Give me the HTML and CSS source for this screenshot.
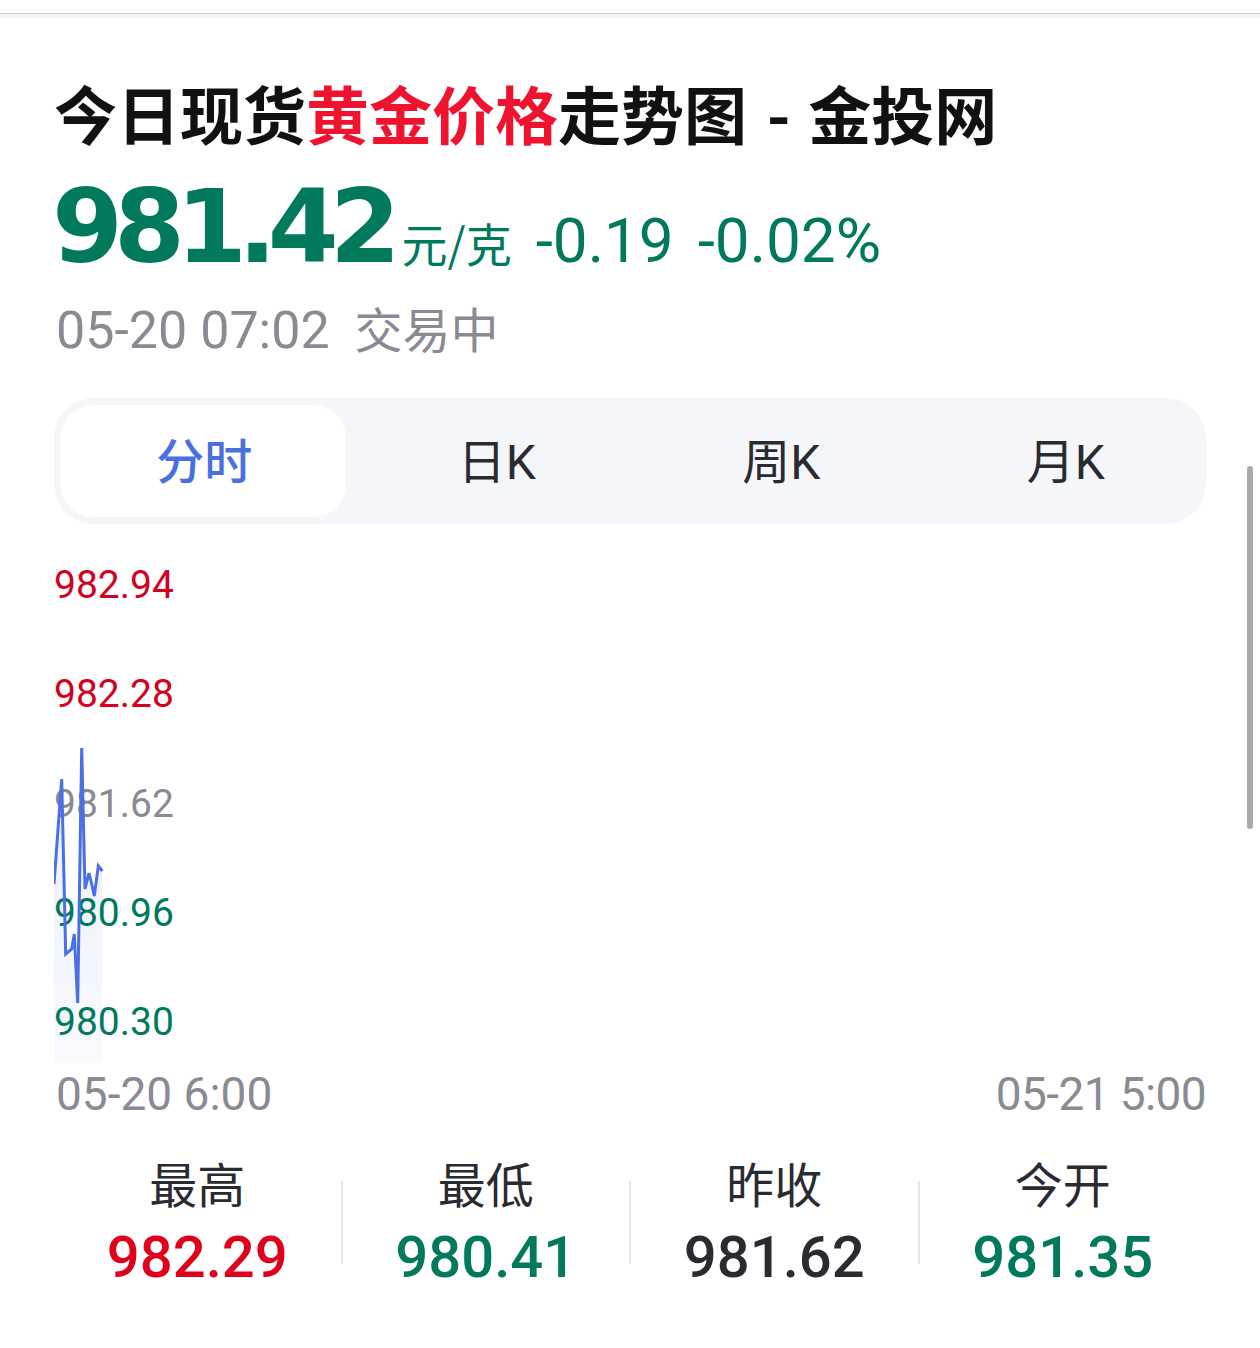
FILE: index.html
```html
<!DOCTYPE html>
<html lang="zh-CN">
<head>
<meta charset="utf-8">
<title>今日现货黄金价格走势图 - 金投网</title>
<link rel="stylesheet" href="styles.css">
</head>
<body>
<div class="topbar"></div>
<div class="topband"></div>
<main class="page">
  <h1 class="title">今日现货<span class="hl">黄金价格</span>走势图<span class="dash">-</span>金投网</h1>
  <div class="price-row">
    <span class="price">981.42</span>
    <span class="unit">元/克</span>
    <span class="change">-0.19</span>
    <span class="change">-0.02%</span>
  </div>
  <div class="status">05-20 07:02 <span class="status-cn">交易中</span></div>

  <nav class="tabs">
    <div class="tab active">分时</div>
    <div class="tab">日K</div>
    <div class="tab">周K</div>
    <div class="tab">月K</div>
  </nav>

  <section class="chart">
    <svg class="plot-area" viewBox="0 0 1152 525" width="1152" height="525" aria-hidden="true">
      <defs>
        <linearGradient id="fill" x1="0" y1="0" x2="0" y2="1">
          <stop offset="0" stop-color="#e9eefb"/>
          <stop offset="1" stop-color="#f9fafe"/>
        </linearGradient>
      </defs>
      <polygon fill="url(#fill)" points="0,343 7.7,238 11.7,413 17.7,408 20.3,393 23.7,462 27.7,207 31,348 35,332 37,340 40.3,355 44.3,325 48.3,330 48.3,522 0,522"/>
    </svg>
    <div class="ylabels">
      <span class="yl up">982.94</span>
      <span class="yl up">982.28</span>
      <span class="yl flat">981.62</span>
      <span class="yl down">980.96</span>
      <span class="yl down">980.30</span>
    </div>
    <svg class="plot-line" viewBox="0 0 1152 525" width="1152" height="525" aria-hidden="true">
      <polyline fill="none" stroke="#4a6fe6" stroke-width="3" stroke-linejoin="miter" points="0,343 7.7,238 11.7,413 17.7,408 20.3,393 23.7,462 27.7,207 31,348 35,332 37,340 40.3,355 44.3,325 48.3,330"/>
    </svg>
  </section>

  <div class="xlabels">
    <span>05-20 6:00</span>
    <span class="xr">05-21 5:00</span>
  </div>

  <section class="stats">
    <div class="stat">
      <div class="stat-label">最高</div>
      <div class="stat-value up">982.29</div>
    </div>
    <div class="divider"></div>
    <div class="stat">
      <div class="stat-label">最低</div>
      <div class="stat-value down">980.41</div>
    </div>
    <div class="divider"></div>
    <div class="stat">
      <div class="stat-label">昨收</div>
      <div class="stat-value flat">981.62</div>
    </div>
    <div class="divider"></div>
    <div class="stat">
      <div class="stat-label">今开</div>
      <div class="stat-value down">981.35</div>
    </div>
  </section>
</main>
<div class="scrollbar"></div>
</body>
</html>
```

FILE: styles.css
```css
html, body {
  margin: 0;
  padding: 0;
  background: #ffffff;
}

body {
  font-family: Roboto, "Noto Sans CJK SC", sans-serif;
  color: #2a2b31;
}

.topbar {
  height: 13px;
  border-bottom: 1px solid #d2d2d2;
}

.topband {
  height: 4px;
  background: #f3f6f6;
}

.page {
  padding: 0 54px;
}

.title {
  margin: 54px 0 0 0;
  font-family: "Noto Sans CJK SC", sans-serif;
  font-weight: 700;
  font-size: 63px;
  line-height: 80px;
  color: #111111;
  white-space: nowrap;
}

.title .hl {
  color: #f0132f;
}

.title .dash {
  display: inline-block;
  margin: 0 18px 0 20px;
}

.price-row {
  margin: 20px 0 0 -2px;
  display: flex;
  align-items: baseline;
  height: 110px;
  color: #00795c;
  white-space: nowrap;
}

.price {
  font-family: "DejaVu Sans", sans-serif;
  font-weight: 700;
  font-size: 102px;
  line-height: 110px;
  letter-spacing: -9px;
}

.unit {
  margin-left: 10px;
  font-family: "Noto Sans CJK SC", sans-serif;
  font-size: 46px;
}

.change {
  margin-left: 24px;
  font-size: 62px;
}

.status {
  margin: 15px 0 0 2px;
  font-size: 52px;
  line-height: 60px;
  color: #8a8a93;
  white-space: nowrap;
}

.status-cn {
  margin-left: 12px;
  font-family: "Noto Sans CJK SC", sans-serif;
  font-size: 48px;
}

.tabs {
  margin-top: 37px;
  display: grid;
  grid-template-columns: repeat(4, 1fr);
  padding: 7px;
  background: #f4f6fa;
  border-radius: 40px;
}

.tab {
  height: 112px;
  box-sizing: border-box;
  padding: 0 0 6px 18px;
  display: flex;
  align-items: center;
  justify-content: center;
  font-family: Roboto, "Noto Sans CJK SC", sans-serif;
  font-size: 48px;
  color: #2a2b31;
  border-radius: 32px;
}

.tab.active {
  padding-left: 2px;
  background: #ffffff;
  color: #4a70e0;
  font-weight: 500;
}

.chart {
  position: relative;
  margin-top: 17px;
  height: 525px;
}

.plot-area,
.plot-line {
  position: absolute;
  left: 0;
  top: 0;
  pointer-events: none;
}

.ylabels {
  position: relative;
  height: 100%;
  box-sizing: border-box;
  padding: 22px 0 22px 0;
  display: flex;
  flex-direction: column;
  justify-content: space-between;
}

.yl {
  font-size: 39px;
  line-height: 44px;
}

.up { color: #d4001d; }
.down { color: #00795c; }
.flat { color: #8a8a93; }

.xlabels {
  display: flex;
  justify-content: space-between;
  font-size: 46px;
  line-height: 56px;
  color: #8a8a93;
  padding: 0 0 0 2px;
}

.xr {
  letter-spacing: -0.6px;
}

.stats {
  margin-top: 30px;
  display: flex;
  align-items: flex-start;
}

.stat {
  flex: 1;
  display: flex;
  flex-direction: column;
  align-items: center;
}

.stat-label {
  font-family: "Noto Sans CJK SC", sans-serif;
  font-size: 48px;
  line-height: 60px;
  color: #2a2b31;
}

.stat-value {
  margin-top: 10px;
  font-size: 58px;
  line-height: 70px;
  font-weight: 500;
}

.stat-value.up { color: #e0001c; }
.stat-value.flat { color: #2a2b31; }

.divider {
  width: 2px;
  height: 83px;
  margin-top: 29px;
  background: #e6e6e6;
}

.scrollbar {
  position: fixed;
  left: 1247px;
  top: 466px;
  width: 6px;
  height: 363px;
  border-radius: 3px;
  background: #ababab;
}
```
